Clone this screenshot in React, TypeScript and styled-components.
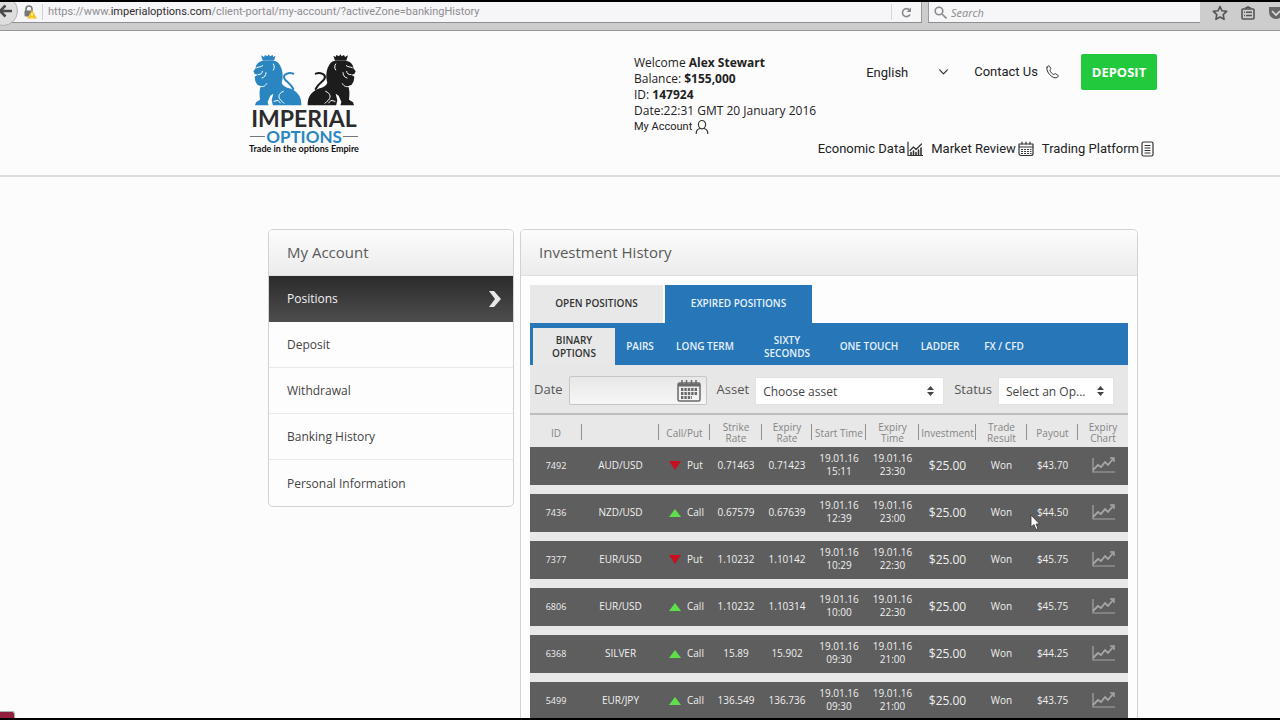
import React from "react";
import styled, { createGlobalStyle } from "styled-components";

const uiFont = `"Open Sans", "Noto Sans", sans-serif`;
const navFont = `Roboto, "Liberation Sans", sans-serif`;
const logoFont = `Lato, "Open Sans", sans-serif`;

const GlobalStyle = createGlobalStyle`
  *, *::before, *::after { box-sizing: border-box; }
  body { margin: 0; background: #fdfcfd; font-family: ${uiFont}; color: #333; }
  button, input, select { font-family: inherit; margin: 0; }
  a { color: inherit; text-decoration: none; }
`;

const Screen = styled.div`
  position: relative;
  display: flex;
  flex-direction: column;
  height: 100vh;
  overflow: hidden;
  border-top: 2px solid #000;
  border-bottom: 2px solid #000;
`;

/* Browser bar */
const BrowserBar = styled.div`
  position: relative;
  flex: none;
  display: flex;
  align-items: flex-start;
  height: 29px;
  background: #cdcdcd;
  border-bottom: 1px solid #979797;
`;
const BackButton = styled.button`
  position: absolute;
  left: -12px;
  top: -6px;
  width: 30px;
  height: 30px;
  padding: 0 0 0 8px;
  display: flex;
  align-items: center;
  border: 1px solid #b0b0b0;
  border-radius: 50%;
  background: #dedede;
`;
const AddressField = styled.div`
  flex: 1;
  display: flex;
  align-items: center;
  height: 21px;
  padding-left: 23px;
  background: #f6f5f8;
  border-bottom: 1px solid #8f8f8f;
  border-right: 1px solid #9a9a9a;
`;
const AddressText = styled.div`
  flex: 1;
  margin-left: 5px;
  padding-left: 5px;
  border-left: 1px solid #d0d0d0;
  font-family: ${navFont};
  font-size: 11px;
  line-height: 16px;
  color: #8d8d90;
  white-space: nowrap;
`;
const Domain = styled.span`
  color: #2f2f2f;
`;
const ReloadButton = styled.button`
  width: 30px;
  height: 16px;
  padding: 0;
  display: flex;
  align-items: center;
  justify-content: center;
  border: 0;
  border-left: 1px solid #d8d8d8;
  background: none;
`;
const SearchField = styled.label`
  display: flex;
  align-items: center;
  gap: 4px;
  flex: 0 0 272px;
  height: 21px;
  margin-left: 6px;
  padding-left: 5px;
  background: #f6f5f8;
  border-bottom: 1px solid #8f8f8f;
  border-left: 1px solid #9a9a9a;
`;
const SearchInput = styled.input`
  flex: 1;
  min-width: 0;
  border: 0;
  padding: 0;
  background: none;
  font-size: 11px;
  outline: none;
  &::placeholder { color: #8a8a8a; font-style: italic; opacity: 1; }
`;
const BarIcons = styled.div`
  display: flex;
  align-items: center;
  gap: 13px;
  flex: 0 0 80px;
  height: 21px;
  padding-left: 12px;
  overflow: hidden;
  svg { flex: none; }
`;

/* Site header */
const SiteHeader = styled.header`
  flex: none;
  height: 146px;
  padding-left: 126px;
  border-bottom: 2px solid #dcdcdc;
`;
const HeaderInner = styled.div`
  display: flex;
  max-width: 908px;
  margin: 0 auto;
  padding-top: 23px;
`;
const Logo = styled.a`
  display: flex;
  flex-direction: column;
  align-items: center;
  flex: 0 0 110px;
  font-family: ${logoFont};
  font-weight: 700;
  white-space: nowrap;
`;
const LogoName = styled.span`
  font-size: 23px;
  line-height: 24px;
  color: #2b2b2b;
`;
const LogoSub = styled.span`
  display: flex;
  align-items: center;
  gap: 1px;
  font-size: 17px;
  line-height: 13px;
  color: #2a86c0;
  &::before, &::after { content: ""; width: 15px; height: 1px; background: #777; }
`;
const LogoTag = styled.span`
  font-size: 9px;
  line-height: 11px;
  color: #111;
`;
const AccountInfo = styled.div`
  flex: none;
  margin-left: 275px;
  padding-top: 1px;
  font-size: 12px;
  line-height: 16px;
  color: #222;
  white-space: nowrap;
`;
const AccountLink = styled.a`
  display: flex;
  align-items: center;
  gap: 3px;
  font-family: ${navFont};
  font-size: 11px;
`;
const HeaderSide = styled.div`
  flex: 1;
  min-width: 0;
  display: flex;
  flex-direction: column;
  align-items: flex-end;
  gap: 50px;
  font-family: ${navFont};
  font-size: 13px;
  line-height: 18px;
  color: #222;
  white-space: nowrap;
`;
const TopActions = styled.div`
  display: flex;
  align-items: center;
`;
const LanguageBox = styled.div`
  display: flex;
  align-items: center;
  width: 82px;
  margin-right: 26px;
`;
const LanguageSelect = styled.select`
  appearance: none;
  flex: 1;
  min-width: 0;
  border: 0;
  padding: 0;
  background: none;
  font-size: 13px;
  color: #222;
`;
const ContactLink = styled.a`
  display: flex;
  align-items: center;
  gap: 8px;
  margin-right: 22px;
`;
const DepositButton = styled.button`
  width: 76px;
  height: 36px;
  padding: 0;
  border: 0;
  border-radius: 2px;
  background: #22c93c;
  color: #fff;
  font-family: ${uiFont};
  font-size: 13px;
  font-weight: 700;
`;
const HeaderNav = styled.nav`
  display: flex;
  gap: 8px;
  margin-right: 3px;
`;
const NavLink = styled.a`
  display: flex;
  align-items: center;
  gap: 2px;
`;

/* Page body */
const Body = styled.main`
  flex: 1;
  min-height: 0;
  padding: 52px 0 0 126px;
`;
const BodyInner = styled.div`
  display: flex;
  align-items: flex-start;
  gap: 6px;
  max-width: 870px;
  margin: 0 auto;
`;
const Panel = styled.section<{ $grow?: boolean }>`
  flex: ${(p) => (p.$grow ? "1" : "0 0 246px")};
  min-width: 0;
  border: 1px solid #d2d2d2;
  border-radius: 5px;
  background: #fefdfe;
  overflow: hidden;
`;
const PanelTitle = styled.h2`
  margin: 0;
  height: 46px;
  padding-left: 18px;
  font-size: 15px;
  line-height: 45px;
  font-weight: 500;
  color: #5a5a5a;
  background: linear-gradient(#fcfcfc, #ececec);
  border-bottom: 1px solid #dedede;
`;
const MenuItem = styled.a<{ $active?: boolean }>`
  display: flex;
  align-items: center;
  justify-content: space-between;
  height: 46px;
  padding: 0 12px 0 18px;
  font-size: 12px;
  font-weight: 500;
  color: ${(p) => (p.$active ? "#f2f2f2" : "#444")};
  background: ${(p) => (p.$active ? "linear-gradient(#2b2b2b, #4d4d4d)" : "none")};
  border-bottom: 1px solid ${(p) => (p.$active ? "#4d4d4d" : "#e9e9e9")};
  &:last-child { border-bottom: 0; }
`;
const PanelBody = styled.div`
  padding: 9px 9px 0;
`;
const MainTabs = styled.div`
  display: flex;
  gap: 2px;
`;
const MainTab = styled.button<{ $active?: boolean }>`
  width: ${(p) => (p.$active ? "147px" : "133px")};
  height: 38px;
  padding: 0 0 2px;
  border: 0;
  font-size: 10px;
  font-weight: 600;
  color: ${(p) => (p.$active ? "#e6f1fa" : "#333")};
  background: ${(p) => (p.$active ? "#2776b8" : "#e8e8e8")};
`;
const SubTabs = styled.div`
  display: flex;
  height: 42px;
  padding: 5px 0 0 3px;
  background: #2776b8;
`;
const SubTab = styled.button<{ $w: number; $active?: boolean }>`
  width: ${(p) => p.$w}px;
  padding: 0 8px;
  border: 0;
  font-size: 10px;
  line-height: 13px;
  font-weight: 600;
  color: ${(p) => (p.$active ? "#333" : "#e6f1fa")};
  background: ${(p) => (p.$active ? "#e8e8e8" : "none")};
`;
const TabLines = styled.span`
  display: block;
`;
const Filters = styled.div`
  display: flex;
  align-items: center;
  height: 50px;
  padding: 3px 0 0 4px;
  background: #e7e7e7;
  border-bottom: 2px solid #bdbdbd;
`;
const FilterLabel = styled.label`
  margin-right: 6px;
  font-size: 13px;
  line-height: 18px;
  padding-bottom: 4px;
  color: #555;
`;
const DateBox = styled.div`
  flex: none;
  display: flex;
  align-items: center;
  width: 138px;
  height: 29px;
  margin-right: 10px;
  padding-right: 5px;
  border: 1px solid #c6c6c6;
  border-radius: 2px;
  background: linear-gradient(#e8e8e8, #f6f6f6);
`;
const DateInput = styled.input`
  flex: 1;
  min-width: 0;
  border: 0;
  background: none;
`;
const SelectBox = styled.div<{ $w: number }>`
  position: relative;
  flex: none;
  width: ${(p) => p.$w}px;
  margin-right: 10px;
  svg { position: absolute; right: 9px; top: 8px; pointer-events: none; }
`;
const FilterSelect = styled.select`
  appearance: none;
  display: block;
  width: 100%;
  height: 28px;
  padding: 2px 20px 0 7px;
  border: 1px solid #e2e2e2;
  border-radius: 0;
  background: #fff;
  font-size: 12px;
  color: #444;
`;
const Positions = styled.table`
  width: 100%;
  table-layout: fixed;
  border-collapse: separate;
  border-spacing: 0;
  background: #e8e8e8;
  text-align: center;
`;
const Col = styled.col<{ $w: number }>`
  width: ${(p) => p.$w}px;
`;
const HeadCell = styled.th`
  height: 32px;
  padding: 4px 2px 0;
  font-size: 10px;
  line-height: 11px;
  font-weight: 400;
  color: #858585;
  background: linear-gradient(#8f8f8f, #8f8f8f) right 0 top 9px / 1px 16px no-repeat;
  &:last-child { background: none; }
`;
const Cell = styled.td<{ $size?: number }>`
  height: 47px;
  padding: 0 0 2px;
  border-bottom: 9px solid #e8e8e8;
  background: #5e5e5e;
  color: #f0f0f0;
  font-size: ${(p) => p.$size ?? 10}px;
  line-height: 13px;
  font-weight: 500;
  svg { display: inline-block; vertical-align: middle; }
`;
const Direction = styled.span`
  display: flex;
  align-items: center;
  gap: 6px;
  padding-left: 10px;
`;
const Pointer = styled.svg`
  position: absolute;
  left: 1030px;
  top: 512px;
`;
const CornerBadge = styled.div`
  position: absolute;
  left: -4px;
  bottom: 0;
  width: 19px;
  height: 7px;
  border: 1px solid #a9b5b0;
  border-bottom: 0;
  border-radius: 0 3px 0 0;
  background: #8f1f3d;
`;

const LionShape = () => (
  <>
    <path d="M27 4l9 5 3-6 7 4 4-6 4 6 8-4 2 6 7-4-5 15H32z" />
    <path d="M30 21C18 24 11 32 11 43L4 52l4 8 9 2-9 6 2 14 6 10 10 5c-4 11-4 26-2 40l-12 8-3 9h139c1-24-11-43-36-51-12-4-20-8-23-17 5-15 4-36-4-50-4-9-10-14-16-15z" />
    <path d="M124 59c-14-5-32 2-27 14 4 10 20 15 27 32" fill="none" strokeWidth="6" stroke="currentColor" strokeLinecap="round" />
    <path d="M50 156l-3-13 8-18 9-6-5 20 4 17z" fill="#fdfcfd" />
    <g fill="none" stroke="#fdfcfd" strokeWidth="3" strokeLinecap="round">
      <path d="M14 41c7-4 11 0 18-6M18 62c9 0 12-3 13-10M30 72c8-2 12-8 12-16M24 97c8 3 15 0 20-8M64 30c4 6 4 12 0 18M66 142l12-3 7 8M94 112c-16 6-18 20-4 30l6 6" />
    </g>
  </>
);

const Lions = () => (
  <svg width="105" height="52" viewBox="0 0 315 156" aria-hidden="true">
    <g fill="#2a86c0" color="#2a86c0"><LionShape /></g>
    <g fill="#1c1c1c" color="#1c1c1c" transform="translate(315 0) scale(-1 1)"><LionShape /></g>
  </svg>
);

const line = { fill: "none", stroke: "#333", strokeWidth: 1.2, strokeLinecap: "round", strokeLinejoin: "round" } as const;

const UserIcon = () => (
  <svg width="14" height="16" viewBox="0 0 14 16" {...line}>
    <path d="M7 1.500a3.600 3.600 0 0 1 3.600 3.700C10.600 7.800 9 9.800 7 9.800S3.400 7.800 3.400 5.200A3.600 3.700 0 0 1 7 1.500zM5 9.500C2.500 10 1.200 11.500 1.200 14.500M9 9.500c2.500.500 3.800 2 3.800 5" />
  </svg>
);
const ChevronDown = () => (
  <svg width="9" height="6" viewBox="0 0 9 6" {...line}><path d="M.700.800l3.800 4 3.800-4" /></svg>
);
const PhoneIcon = () => (
  <svg width="13" height="14" viewBox="0 0 13 14" {...line} strokeWidth={1}>
    <path d="M1 2.200C1.600.900 3 .500 3.700 1.500l1 1.700c.400.800-.5 1.400-.8 2 .4 1.700 2 3.600 3.800 4.300.7-.2 1.200-1.100 2-.7l1.900 1.100c1.100.7.6 2.100-.7 2.700C6.500 14.200-.400 7 1 2.200z" />
  </svg>
);
const EconomyIcon = () => (
  <svg width="16" height="16" viewBox="0 0 16 16" {...line}>
    <path d="M1 1v13.500h14.500M3 9.500l3.500-3.500L9 8.500l5.500-5.500" />
    <path d="M4 14v-2.500M6.500 14v-4M9 14v-2.500M11.500 14V9M14 14V7" strokeWidth="1.600" />
  </svg>
);
const ReviewIcon = () => (
  <svg width="16" height="16" viewBox="0 0 16 16" {...line}>
    <path d="M1 3h14v9.500a2 2 0 0 1-2 2H3a2 2 0 0 1-2-2zM1 6h14M4 1.200v2M8 1.200v2M12 1.200v2" />
    <path d="M3.500 8.500h9.500M3.500 10.500h9.500M3.500 12.500h9.500" strokeDasharray="1 2" />
  </svg>
);
const PlatformIcon = () => (
  <svg width="13" height="16" viewBox="0 0 13 16" {...line}>
    <rect x="1" y="1" width="11" height="14" rx="1.500" /><path d="M4 4.500h5M4 7h5M4 9.500h5M4 12h5" />
  </svg>
);
const CalendarIcon = () => (
  <svg width="24" height="22" viewBox="0 0 24 22" fill="none" stroke="#6a6a6a">
    <rect x="1" y="3" width="22" height="18" rx="1.500" strokeWidth="1.500" />
    <path d="M1 5h22" strokeWidth="3" />
    <path d="M5 0v5M9.500 0v5M14.500 0v5M19 0v5" strokeWidth="1.500" />
    <path d="M4 9.500h17M4 13.500h17M4 17.500h11" strokeWidth="3" strokeDasharray="2.400 1" />
  </svg>
);
const UpDown = () => (
  <svg width="9" height="12" viewBox="0 0 9 12" fill="#444"><path d="M4.500 1L8 5H1zM4.500 11L1 7h7z" /></svg>
);
const ChartIcon = () => (
  <svg width="25" height="18" viewBox="0 0 25 18" fill="none" stroke="#a6a6a6">
    <path d="M2 2v14h22" strokeWidth="1.200" />
    <path d="M2 14l5-5 3 2 4-5 3 3 5-6" strokeWidth="1.800" />
    <path d="M19 2h4v4" strokeWidth="1.500" />
  </svg>
);

const menu = ["Positions", "Deposit", "Withdrawal", "Banking History", "Personal Information"];
const subTabs: [string[], number][] = [
  [["BINARY", "OPTIONS"], 82], [["PAIRS"], 50], [["LONG TERM"], 80], [["SIXTY", "SECONDS"], 84],
  [["ONE TOUCH"], 80], [["LADDER"], 62], [["FX / CFD"], 66],
];
const columns: [string, number][] = [
  ["ID", 52], ["", 77], ["Call/Put", 51], ["Strike Rate", 52], ["Expiry Rate", 50], ["Start Time", 54],
  ["Expiry Time", 53], ["Investment", 57], ["Trade Result", 51], ["Payout", 51], ["Expiry Chart", 50],
];
const rows = [
  ["7492", "AUD/USD", "Put", "0.71463", "0.71423", "15:11", "23:30", "$43.70"],
  ["7436", "NZD/USD", "Call", "0.67579", "0.67639", "12:39", "23:00", "$44.50"],
  ["7377", "EUR/USD", "Put", "1.10232", "1.10142", "10:29", "22:30", "$45.75"],
  ["6806", "EUR/USD", "Call", "1.10232", "1.10314", "10:00", "22:30", "$45.75"],
  ["6368", "SILVER", "Call", "15.89", "15.902", "09:30", "21:00", "$44.25"],
  ["5499", "EUR/JPY", "Call", "136.549", "136.736", "09:30", "21:00", "$43.75"],
];

export default function App() {
  return (
    <Screen>
      <GlobalStyle />
      <BrowserBar>
        <AddressField>
          <svg width="14" height="14" viewBox="0 0 14 14">
            <path d="M3 6V4a3 3 0 0 1 6 0v2" fill="none" stroke="#777" strokeWidth="1.600" />
            <rect x="1.500" y="5.500" width="8" height="6" rx="1" fill="#777" />
            <path d="M9 5l5 8.500H4z" fill="#f0c419" /><path d="M9 8v3M9 12v.8" stroke="#fff" />
          </svg>
          <AddressText>
            https://www.<Domain>imperialoptions.com</Domain>/client-portal/my-account/?activeZone=bankingHistory
          </AddressText>
          <ReloadButton aria-label="Reload">
            <svg width="11" height="11" viewBox="0 0 11 11" fill="none" stroke="#8a8a8a" strokeWidth="1.600">
              <path d="M9 7.500A4 4 0 1 1 8.500 3" /><path d="M10 .500v4.500H5.500z" fill="#8a8a8a" stroke="none" />
            </svg>
          </ReloadButton>
        </AddressField>
        <SearchField>
          <svg width="13" height="13" viewBox="0 0 13 13" fill="none" stroke="#8a8a8a" strokeWidth="1.600">
            <circle cx="5" cy="5" r="3.800" /><path d="M8 8l4.500 4.500" />
          </svg>
          <SearchInput aria-label="Search" placeholder="Search" />
        </SearchField>
        <BarIcons>
          <svg width="16" height="16" viewBox="0 0 16 16" fill="none" stroke="#555" strokeWidth="1.600" strokeLinejoin="round">
            <path d="M8 1.500l2 4.300 4.700.600-3.500 3.200.9 4.700L8 12l-4.100 2.300.9-4.700L1.300 6.400 6 5.800z" />
          </svg>
          <svg width="14" height="14" viewBox="0 0 14 14" fill="none" stroke="#555" strokeWidth="1.600">
            <rect x="1" y="3" width="12" height="10" rx="1" /><path d="M4 2.500L7 1l3 1.500M3 6.200h1M5 6.200h6M3 9.500h1M5 9.500h6" />
          </svg>
          <svg width="16" height="14" viewBox="0 0 16 14">
            <path d="M1 1h14v5a7 7 0 0 1-14 0z" fill="#666" /><path d="M4 5l4 4 4-4" fill="none" stroke="#ddd" strokeWidth="1.600" />
          </svg>
        </BarIcons>
        <BackButton aria-label="Back">
          <svg width="16" height="14" viewBox="0 0 16 14" fill="none" stroke="#4a4a4a" strokeWidth="2.600">
            <path d="M8.500 1.500L3 7l5.500 5.500M3 7h12" />
          </svg>
        </BackButton>
      </BrowserBar>

      <SiteHeader>
        <HeaderInner>
          <Logo href="#">
            <Lions />
            <LogoName>IMPERIAL</LogoName>
            <LogoSub>OPTIONS</LogoSub>
            <LogoTag>Trade in the options Empire</LogoTag>
          </Logo>
          <AccountInfo>
            <div>Welcome <b>Alex Stewart</b></div>
            <div>Balance: <b>$155,000</b></div>
            <div>ID: <b>147924</b></div>
            <div>Date:22:31 GMT 20 January 2016</div>
            <AccountLink href="#">My Account<UserIcon /></AccountLink>
          </AccountInfo>
          <HeaderSide>
            <TopActions>
              <LanguageBox>
                <LanguageSelect aria-label="Language"><option>English</option></LanguageSelect>
                <ChevronDown />
              </LanguageBox>
              <ContactLink href="#">Contact Us<PhoneIcon /></ContactLink>
              <DepositButton>DEPOSIT</DepositButton>
            </TopActions>
            <HeaderNav>
              <NavLink href="#">Economic Data<EconomyIcon /></NavLink>
              <NavLink href="#">Market Review<ReviewIcon /></NavLink>
              <NavLink href="#">Trading Platform<PlatformIcon /></NavLink>
            </HeaderNav>
          </HeaderSide>
        </HeaderInner>
      </SiteHeader>

      <Body>
        <BodyInner>
          <Panel>
            <PanelTitle>My Account</PanelTitle>
            <nav>
              {menu.map((m, i) => (
                <MenuItem key={m} href="#" $active={i === 0}>
                  {m}
                  {i === 0 && (
                    <svg width="12" height="16" viewBox="0 0 12 16" fill="#e8e8e8"><path d="M0 0h5l7 8-7 8H0l6-8z" /></svg>
                  )}
                </MenuItem>
              ))}
            </nav>
          </Panel>
          <Panel $grow>
            <PanelTitle>Investment History</PanelTitle>
            <PanelBody>
              <MainTabs>
                <MainTab>OPEN POSITIONS</MainTab>
                <MainTab $active>EXPIRED POSITIONS</MainTab>
              </MainTabs>
              <SubTabs>
                {subTabs.map(([lines, w], i) => (
                  <SubTab key={lines[0]} $w={w} $active={i === 0}>
                    {lines.map((l) => <TabLines key={l}>{l}</TabLines>)}
                  </SubTab>
                ))}
              </SubTabs>
              <Filters>
                <FilterLabel htmlFor="date">Date</FilterLabel>
                <DateBox><DateInput id="date" type="text" /><CalendarIcon /></DateBox>
                <FilterLabel htmlFor="asset">Asset</FilterLabel>
                <SelectBox $w={189}>
                  <FilterSelect id="asset"><option>Choose asset</option></FilterSelect><UpDown />
                </SelectBox>
                <FilterLabel htmlFor="status">Status</FilterLabel>
                <SelectBox $w={116}>
                  <FilterSelect id="status"><option>Select an Op...</option></FilterSelect><UpDown />
                </SelectBox>
              </Filters>
              <Positions>
                <colgroup>{columns.map(([, w], i) => <Col key={i} $w={w} />)}</colgroup>
                <thead>
                  <tr>{columns.map(([c], i) => <HeadCell key={i}>{c}</HeadCell>)}</tr>
                </thead>
                <tbody>
                  {rows.map(([id, asset, dir, strike, expiry, start, end, payout]) => (
                    <tr key={id}>
                      <Cell $size={9}>{id}</Cell>
                      <Cell>{asset}</Cell>
                      <Cell>
                        <Direction>
                          <svg width="12" height="9" viewBox="0 0 12 9">
                            {dir === "Put" ? <path d="M0 0h12L6 9z" fill="#c80f1e" /> : <path d="M0 9h12L6 1z" fill="#5fe04a" />}
                          </svg>
                          {dir}
                        </Direction>
                      </Cell>
                      <Cell>{strike}</Cell>
                      <Cell>{expiry}</Cell>
                      <Cell>19.01.16<br />{start}</Cell>
                      <Cell>19.01.16<br />{end}</Cell>
                      <Cell $size={12}>$25.00</Cell>
                      <Cell>Won</Cell>
                      <Cell>{payout}</Cell>
                      <Cell><ChartIcon /></Cell>
                    </tr>
                  ))}
                </tbody>
              </Positions>
            </PanelBody>
          </Panel>
        </BodyInner>
      </Body>

      <Pointer width="10" height="17" viewBox="0 0 10 17" aria-hidden="true">
        <path d="M1 1v12l3-2.500 2 5 2-1-2-4.500h3.500z" fill="#fff" stroke="#333" strokeWidth=".8" />
      </Pointer>
      <CornerBadge />
    </Screen>
  );
}
